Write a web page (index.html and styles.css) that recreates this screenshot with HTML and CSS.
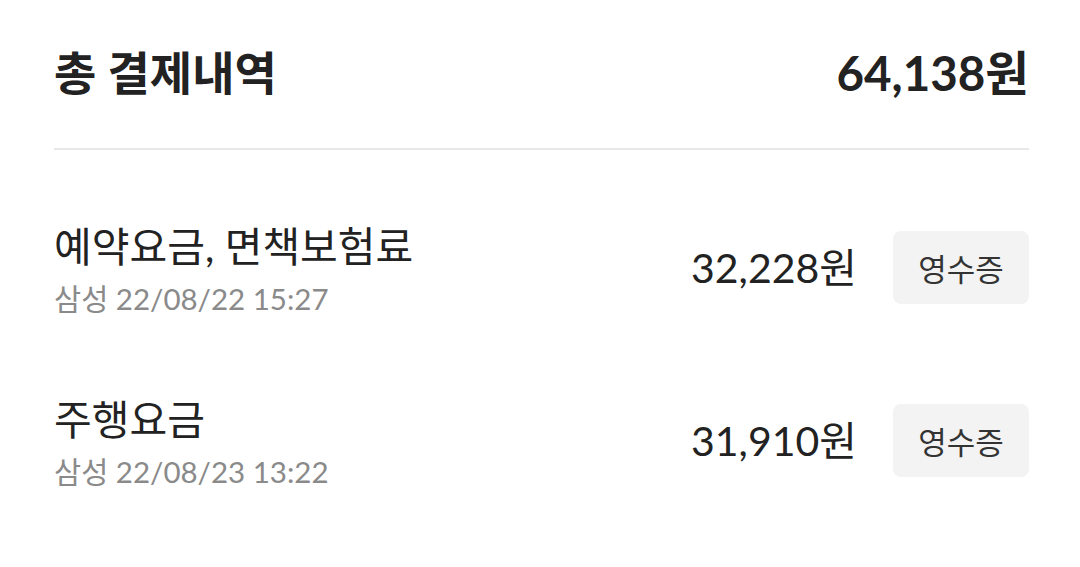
FILE: index.html
```html
<!DOCTYPE html>
<html lang="ko">
<head>
<meta charset="utf-8">
<title>총 결제내역</title>
<link rel="stylesheet" href="styles.css">
</head>
<body>
<div class="page">
  <div class="header">
    <div class="header-title">총 결제내역</div>
    <div class="header-total">64,138원</div>
  </div>
  <div class="divider"></div>
  <div class="list">
    <div class="row">
      <div class="info">
        <div class="title">예약요금, 면책보험료</div>
        <div class="meta">삼성 22/08/22 15:27</div>
      </div>
      <div class="amount">32,228원</div>
      <div class="receipt">영수증</div>
    </div>
    <div class="row">
      <div class="info">
        <div class="title">주행요금</div>
        <div class="meta">삼성 22/08/23 13:22</div>
      </div>
      <div class="amount">31,910원</div>
      <div class="receipt">영수증</div>
    </div>
  </div>
</div>
</body>
</html>
```
FILE: styles.css
```css
html, body {
  margin: 0;
  padding: 0;
  background: #ffffff;
}
body {
  font-family: "Lato", "Noto Sans CJK KR", sans-serif;
  color: #222222;
}
.page {
  padding: 0 51px 0 54px;
}
.header {
  height: 140px;
  display: flex;
  align-items: center;
  justify-content: space-between;
}
.header-title {
  font-size: 46px;
  font-weight: 700;
}
.header-total {
  font-size: 47.5px;
  font-weight: 700;
}
.divider {
  margin-top: 8px;
  height: 2px;
  background: #e8e8e8;
}
.list {
  padding-top: 31px;
}
.row {
  height: 173px;
  display: flex;
  align-items: center;
}
.info {
  flex: 1;
  margin-top: 6px;
}
.title {
  font-size: 41px;
  line-height: 48px;
}
.meta {
  margin-top: 8px;
  font-size: 29.5px;
  line-height: 40px;
  color: #8a8a8a;
}
.amount {
  font-size: 41px;
  margin-bottom: 6px;
}
.receipt {
  margin-left: 36px;
  width: 136px;
  height: 73px;
  border-radius: 8px;
  background: #f3f3f3;
  display: flex;
  align-items: center;
  justify-content: center;
  font-size: 31px;
  color: #333333;
}
```
